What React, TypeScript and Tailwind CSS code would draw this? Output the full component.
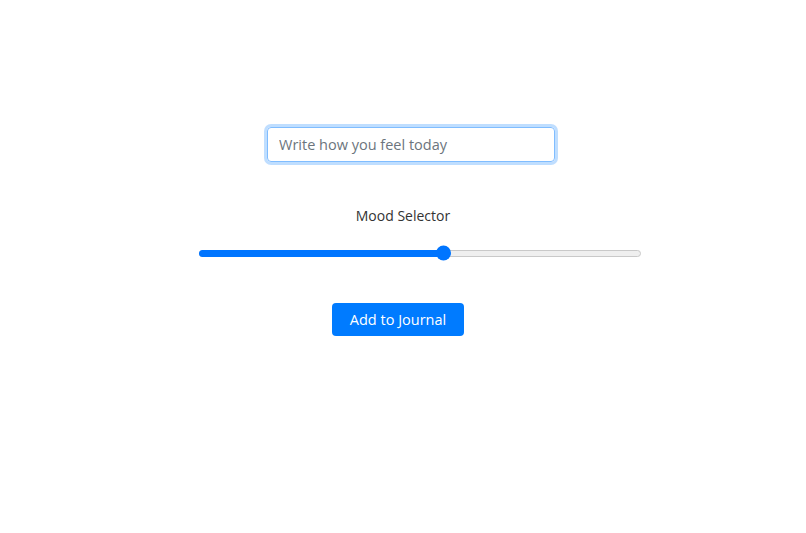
export default function App() {
  const mood = 6
  const pct = ((mood - 1) / 9) * 100

  return (
    <main
      className="min-h-[533px] w-full bg-white flex flex-col items-center pt-[127px]"
      style={{ fontFamily: '"Open Sans", "Noto Sans", sans-serif' }}
    >
      <input
        type="text"
        placeholder="Write how you feel today"
        className="ml-[16px] h-[35px] w-[288px] rounded-[4px] border border-[#80bdff] px-[11px] text-[14.5px] text-[#495057] placeholder:text-[#6c757d] outline-none shadow-[0_0_0_3px_rgba(0,123,255,0.25)]"
      />

      <div className="mt-[44px] text-[14px] text-[#333] leading-[20px]">Mood Selector</div>

      {/* slider */}
      <div className="ml-[34px] mt-[20px] w-[442px] h-[14px] flex items-center">
        <div className="relative w-full h-[7px] rounded-full bg-[#efefef] border border-[#c9c9c9]">
          <div
            className="absolute left-[-1px] top-[-1px] h-[7px] rounded-full bg-[#0075ff]"
            style={{ width: `calc(${pct}% + 7px)` }}
          />
          <div
            className="absolute top-1/2 -translate-y-1/2 h-[15px] w-[15px] rounded-full bg-[#0075ff]"
            style={{ left: `calc(${pct}% * 0.97 - 1px)` }}
          />
        </div>
      </div>

      <button className="mr-[10px] mt-[43px] h-[33px] w-[132px] rounded-[4px] bg-[#007bff] text-white text-[14.5px]">
        Add to Journal
      </button>
    </main>
  )
}
